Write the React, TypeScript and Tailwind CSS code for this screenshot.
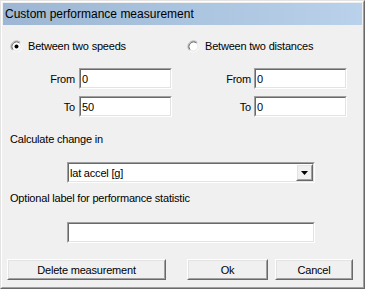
import React from "react";

function Radio({ checked }: { checked?: boolean }) {
  return (
    <svg width="13" height="13" viewBox="0 0 13 13" className="shrink-0">
      <circle cx="6.5" cy="6.5" r="5" fill="#ffffff" />
      <path d="M2.61 10.39 A5.5 5.5 0 0 1 10.39 2.61" fill="none" stroke="#a0a0a0" strokeWidth="1" />
      <path d="M10.39 2.61 A5.5 5.5 0 0 1 2.61 10.39" fill="none" stroke="#ffffff" strokeWidth="1" />
      <path d="M3.32 9.68 A4.5 4.5 0 0 1 9.68 3.32" fill="none" stroke="#696969" strokeWidth="1" />
      <path d="M9.68 3.32 A4.5 4.5 0 0 1 3.32 9.68" fill="none" stroke="#e3e3e3" strokeWidth="1" />
      {checked && <circle cx="6.5" cy="6.5" r="2" fill="#000000" />}
    </svg>
  );
}

function Field({ className, children }: { className?: string; children?: React.ReactNode }) {
  return (
    <div className={`border border-t-[#a0a0a0] border-l-[#a0a0a0] border-b-white border-r-white ${className ?? ""}`}>
      <div className="h-full border border-t-[#696969] border-l-[#696969] border-b-[#e3e3e3] border-r-[#e3e3e3] bg-white flex items-center pl-[1px]">
        {children}
      </div>
    </div>
  );
}

function Btn({ className, children }: { className?: string; children?: React.ReactNode }) {
  return (
    <div className={`border border-t-white border-l-white border-b-[#696969] border-r-[#696969] ${className ?? ""}`}>
      <div className="h-full border border-t-[#e3e3e3] border-l-[#e3e3e3] border-b-[#a0a0a0] border-r-[#a0a0a0] bg-[#f0f0f0] flex items-center justify-center">
        {children}
      </div>
    </div>
  );
}

export default function App() {
  return (
    <div className="w-[365px] h-[289px] border border-t-[#e3e3e3] border-l-[#e3e3e3] border-b-[#696969] border-r-[#696969] font-['Liberation_Sans',Arial,sans-serif] text-black">
      <div className="h-full border border-t-white border-l-white border-b-[#a0a0a0] border-r-[#a0a0a0] bg-[#f0f0f0] p-[1px] flex flex-col">
        <div className="h-[22px] flex items-center pl-[2px] bg-gradient-to-r from-[#9cb6d3] to-[#b9d1ea] text-[12px] leading-none">
          Custom performance measurement
        </div>
        <div className="flex flex-col text-[11px] tracking-[-0.2px] leading-[14px]">
          <div className="flex mt-[14px] h-[14px]">
            <div className="w-[177px] pl-[7px] flex items-center gap-[5px]">
              <Radio checked />
              <span>Between two speeds</span>
            </div>
            <div className="pl-[7px] flex items-center gap-[5px]">
              <Radio />
              <span>Between two distances</span>
            </div>
          </div>
          <div className="flex mt-[15px]">
            <div className="w-[177px] flex items-center">
              <span className="w-[72px] text-right">From</span>
              <Field className="ml-[4px] w-[93px] h-[21px]">0</Field>
            </div>
            <div className="flex items-center">
              <span className="w-[71px] text-right">From</span>
              <Field className="ml-[3px] w-[93px] h-[21px]">0</Field>
            </div>
          </div>
          <div className="flex mt-[7px]">
            <div className="w-[177px] flex items-center">
              <span className="w-[72px] text-right">To</span>
              <Field className="ml-[4px] w-[93px] h-[21px]">50</Field>
            </div>
            <div className="flex items-center">
              <span className="w-[71px] text-right">To</span>
              <Field className="ml-[3px] w-[93px] h-[21px]">0</Field>
            </div>
          </div>
          <div className="mt-[15px] pl-[7px]">Calculate change in</div>
          <Field className="mt-[16px] ml-[64px] w-[248px] h-[21px]">
            <span className="flex-1">lat accel [g]</span>
            <Btn className="w-[17px] h-[17px]">
              <svg width="7" height="4" viewBox="0 0 7 4">
                <path d="M0 0 H7 L3.5 4 Z" fill="#000" />
              </svg>
            </Btn>
          </Field>
          <div className="mt-[8px] pl-[7px]">Optional label for performance statistic</div>
          <Field className="mt-[17px] ml-[64px] w-[248px] h-[21px]" />
          <div className="flex mt-[16px]">
            <Btn className="ml-[4px] w-[159px] h-[21px]">Delete measurement</Btn>
            <Btn className="ml-[21px] w-[81px] h-[21px]">Ok</Btn>
            <Btn className="ml-[7px] w-[78px] h-[21px]">Cancel</Btn>
          </div>
        </div>
      </div>
    </div>
  );
}
